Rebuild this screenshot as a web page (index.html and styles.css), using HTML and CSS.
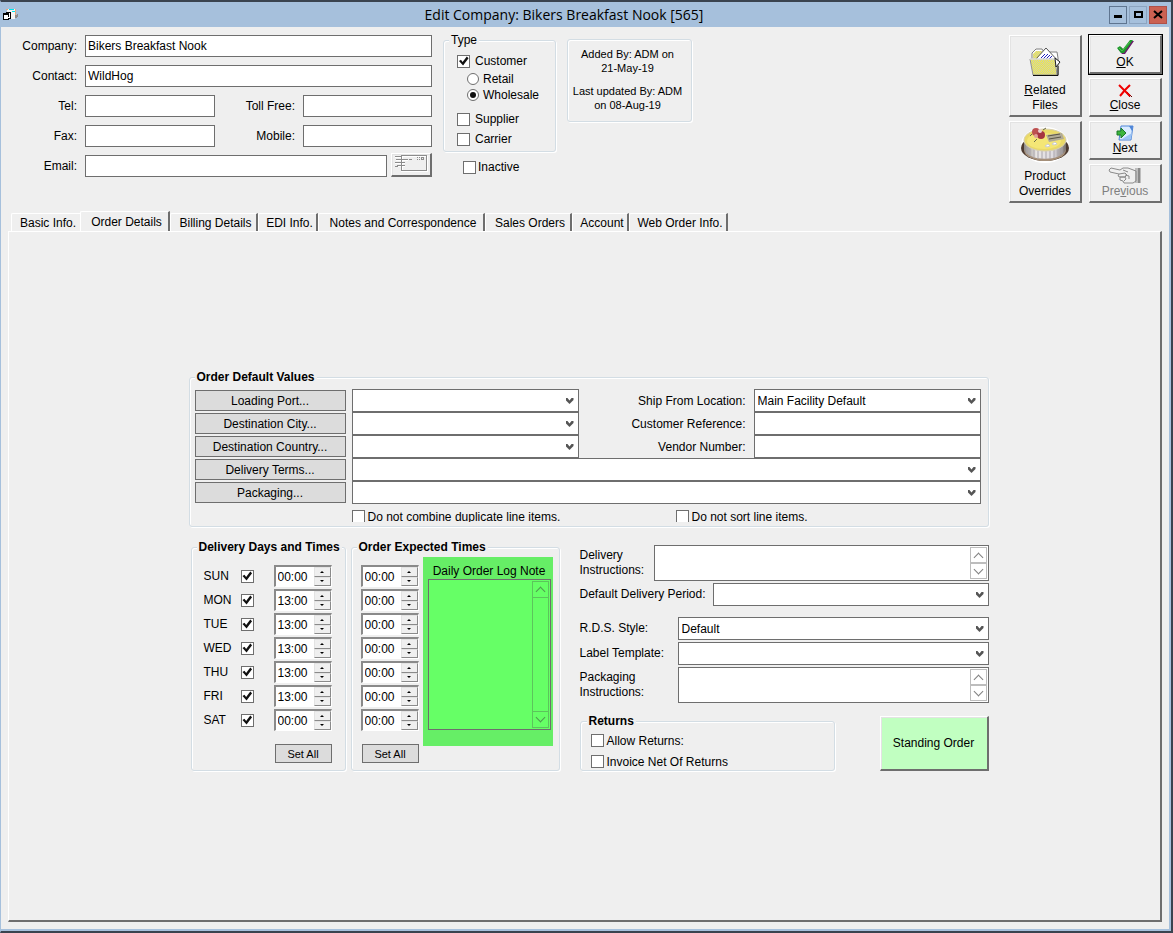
FILE: index.html
```html
<!DOCTYPE html>
<html lang="en">

<head>
    <meta charset="UTF-8">
    <title>Edit Company: Bikers Breakfast Nook [565]</title>
    <link rel="stylesheet" href="styles.css">
</head>

<body>
    <header class="titlebar">
        <svg class="app-icon" width="16" height="14" viewBox="0 0 16 14" shape-rendering="crispEdges">
            <path d="M4 1h8v10H4z" fill="#f4f4f4" />
            <path d="M3 1h2v1H3zM12 1h1v6h-1z" fill="#e8a87c" />
            <path d="M6 1h5v1H6zM9 3h3v1H9zM5 4h3v1H5z" fill="#00e5ee" />
            <path d="M12 7h2v3h-2zM14 6h1v3h-1z" fill="#8a8a8a" />
            <path d="M3 4h5v7H3zM0 5h6v7H0z" fill="#000" />
            <path d="M4 5h3v5H4zM1 7h4v4H1z" fill="#fff" />
            <path d="M5 6h1v3H5zM0 5h6v2H0z" fill="#000" />
        </svg>
        <h1>Edit Company: Bikers Breakfast Nook [565]</h1>
        <div class="window-buttons">
            <button type="button" class="win-btn" aria-label="Minimize"><svg width="10" height="9" viewBox="0 0 10 9"><path d="M1 5h8v3H1z" /></svg></button>
            <button type="button" class="win-btn soft" aria-label="Maximize"><svg width="10" height="9" viewBox="0 0 10 9"><path fill-rule="evenodd" d="M1 1h9v7H1zM3 3h5v3H3z" /></svg></button>
            <button type="button" class="win-btn close" aria-label="Close window"><svg width="10" height="9" viewBox="0 0 10 9"><path d="M1 1l8 7M9 1L1 8" stroke="#000" stroke-width="2" /></svg></button>
        </div>
    </header>

    <main>
        <div class="top">
            <div class="contact">
                <label for="company">Company:</label>
                <input class="wide" id="company" type="text" value="Bikers Breakfast Nook">
                <label for="contact">Contact:</label>
                <input class="wide" id="contact" type="text" value="WildHog">
                <label for="tel">Tel:</label>
                <input id="tel" type="text">
                <label for="tollfree">Toll Free:</label>
                <input id="tollfree" type="text">
                <label for="fax">Fax:</label>
                <input id="fax" type="text">
                <label for="mobile">Mobile:</label>
                <input id="mobile" type="text">
                <label for="email">Email:</label>
                <div class="wide email">
                    <input id="email" type="text">
                    <button type="button" class="raised mail" aria-label="Send email">
                        <svg width="34" height="18" viewBox="0 0 34 18">
                            <path d="M8 2h24v1H8zM8 3h1v13H8zM7 17h27v1H7zM33 2h1v16h-1zM1 3h7v1H1zM2 6h12v1H2zM1 9h10v1H1zM3 12h8v1H3z" fill="#fff" />
                            <path d="M7 1h26v1H7zM7 1h1v16H7zM7 16h26v1H7zM32 1h1v16h-1zM1 2h6v1H1zM2 5h12v1H2zM15 5h3v1h-3zM1 8h10v1H1zM3 11h8v1H3zM1 12h3v1H1z" fill="#8c8c8c" />
                            <path fill-rule="evenodd" d="M23 3h1v1h-1zM25 3h1v1h-1zM23 5h1v1h-1zM25 5h1v1h-1zM27 3h3v3h-3zM28 4h1v1h-1z" fill="#8c8c8c" />
                        </svg>
                    </button>
                </div>
            </div>

            <div class="kind">
                <fieldset class="group type">
                    <legend>Type</legend>
                    <label class="check"><input type="checkbox" checked>Customer</label>
                    <label class="check radio"><input type="radio" name="customer">Retail</label>
                    <label class="check radio"><input type="radio" name="customer" checked>Wholesale</label>
                    <label class="check supplier"><input type="checkbox">Supplier</label>
                    <label class="check"><input type="checkbox">Carrier</label>
                </fieldset>
                <label class="check inactive"><input type="checkbox">Inactive</label>
            </div>

            <div class="audit">
                <p>Added By: ADM on<br>21-May-19</p>
                <p>Last updated By: ADM<br>on 08-Aug-19</p>
            </div>

            <div class="actions">
                <button type="button" class="raised tall">
                    <svg width="34" height="32" viewBox="0 0 34 32">
                        <defs>
                            <pattern id="dither" width="2" height="2" patternUnits="userSpaceOnUse">
                                <path d="M0 0h2v2H0z" fill="#f6f03c" />
                                <path d="M0 0h1v1H0zM1 1h1v1H1z" fill="#c9c9b8" />
                            </pattern>
                        </defs>
                        <path d="M4 13V7l4-4h6l2 3h13l1 6v17h-3z" fill="#fff" stroke="#808080" />
                        <path d="M5 13V8l3-3h6v8z" fill="url(#dither)" />
                        <path d="M8 13L18 2l13 14-4 5z" fill="#fff" stroke="#555" />
                        <path d="M13 12l4-4M15 13l5-5M18 13l4-4M21 13l3-3" stroke="#2020c0" />
                        <path d="M2 13h25l2 16H5z" fill="url(#dither)" stroke="#909090" />
                        <path d="M2 13h25l1 3" fill="none" stroke="#fff" />
                        <path d="M5 29.500h25V20" fill="none" stroke="#111" stroke-width="1" />
                        <path d="M27 12l5 4-4 5z" fill="#fff" stroke="#222" />
                    </svg>
                    <span><u>R</u>elated<br>Files</span>
                </button>
                <button type="button" class="raised default">
                    <svg width="18" height="16" viewBox="0 0 18 16">
                        <path d="M2 10l3-2 3 3 7-9h3L9 15H6z" fill="#6a1a6a" />
                        <path d="M1 9l3-2 3 3 7-9h3L8 14H5z" fill="#1f9a2c" />
                        <path d="M3 9l3 3 8-9" fill="none" stroke="#4cc24c" />
                    </svg>
                    <span><u>O</u>K</span>
                </button>
                <button type="button" class="raised">
                    <svg width="16" height="14" viewBox="0 0 16 14">
                        <path d="M3 2l6 6 4 5M10 8l5 5" fill="none" stroke="#600000" />
                        <path d="M2 1l7 7 4 4" fill="none" stroke="#f00000" stroke-width="2" />
                        <path d="M13 1L8 6l-5 6" fill="none" stroke="#f00000" stroke-width="2" />
                    </svg>
                    <span><u>C</u>lose</span>
                </button>
                <button type="button" class="raised tall">
                    <svg width="50" height="38" viewBox="0 0 50 38">
                        <defs>
                            <linearGradient id="side">
                                <stop offset="0" stop-color="#8e8a86" />
                                <stop offset=".3" stop-color="#e9e6e4" />
                                <stop offset=".7" stop-color="#dedbe0" />
                                <stop offset="1" stop-color="#77706c" />
                            </linearGradient>
                        </defs>
                        <ellipse cx="25" cy="19" rx="24" ry="18" fill="#fff" />
                        <ellipse cx="25" cy="22" rx="24" ry="13" fill="#4d3a30" />
                        <ellipse cx="25" cy="24" rx="21" ry="11" fill="#a58f79" />
                        <path d="M4 14v9c3 13 39 13 42 0v-9z" fill="url(#side)" />
                        <path d="M7 20v8M10 22v8M14 23v9M18 24v9M22 24v9M26 24v9M30 24v9M34 23v9M38 22v8M42 20v8" stroke="#a9a4aa" fill="none" />
                        <ellipse cx="25" cy="14" rx="21" ry="11" fill="#ead968" stroke="#d8d0b0" />
                        <ellipse cx="24" cy="15" rx="17" ry="8" fill="#f4e676" />
                        <path d="M26 9l16-2 2 6-15 3z" fill="#b1aa96" />
                        <path d="M28 10l12-2M29 13l12-2" stroke="#5a5446" />
                        <circle cx="16" cy="6" r="4" fill="#bd5050" />
                        <circle cx="21" cy="9" r="4" fill="#a63440" />
                        <circle cx="20" cy="5" r="2" fill="#ead0d0" />
                        <circle cx="16" cy="10" r="2" fill="#e0a098" />
                        <path d="M12 8l-2 2M17 13l-3 3M23 4l3-2" stroke="#6a6a4a" />
                        <path d="M25 20l3-2 2 2-3 1zM32 18l3-2 2 2-3 1z" fill="#fff" stroke="#ccc" />
                    </svg>
                    <span>Product<br>Overrides</span>
                </button>
                <button type="button" class="raised">
                    <svg width="18" height="16" viewBox="0 0 18 16">
                        <path d="M5 1h12l-2 14H3z" fill="#d9ebff" stroke="#4f86d8" />
                        <path d="M13 1h4l-1 5z" fill="#4f86d8" />
                        <path d="M6 14h9l1-6z" fill="#9cc3f4" />
                        <path d="M1 6h4V3l5 5-5 5v-3H1z" fill="#3db53d" stroke="#1d7a2a" />
                    </svg>
                    <span><u>N</u>ext</span>
                </button>
                <button type="button" class="raised" disabled>
                    <svg width="34" height="17" viewBox="0 0 34 17" fill="#efefef" stroke="#8a8a8a">
                        <path d="M3 1L1 3l1 2 9 2-1 2 2 1v3l3 1 1 2h9l3-2V4l-8-3h-5l-3 2z" />
                        <path d="M11 7l6-1 2 2-2 2h-5M12 10h5l1 2-2 2M17 8l4 1v3M15 3l5 2" fill="none" />
                        <path d="M28 1v15" stroke-width="1" />
                        <path d="M31 1v15" stroke-width="3" />
                    </svg>
                    <span>Pre<u>v</u>ious</span>
                </button>
            </div>
        </div>

        <nav class="tabs" role="tablist">
            <button type="button" role="tab">Basic Info.</button>
            <button type="button" role="tab" class="selected" aria-selected="true">Order Details</button>
            <button type="button" role="tab">Billing Details</button>
            <button type="button" role="tab">EDI Info.</button>
            <button type="button" role="tab">Notes and Correspondence</button>
            <button type="button" role="tab">Sales Orders</button>
            <button type="button" role="tab">Account</button>
            <button type="button" role="tab">Web Order Info.</button>
        </nav>

        <section class="panel">
            <div class="content">
                <fieldset class="group bold defaults">
                    <legend>Order Default Values</legend>
                    <div class="defaults-grid">
                        <button type="button" class="flat">Loading Port...</button>
                        <span class="select"><select aria-label="Loading Port"><option></option></select></span>
                        <label for="ship">Ship From Location:</label>
                        <span class="select"><select id="ship"><option>Main Facility Default</option></select></span>

                        <button type="button" class="flat">Destination City...</button>
                        <span class="select"><select aria-label="Destination City"><option></option></select></span>
                        <label for="custref">Customer Reference:</label>
                        <input id="custref" type="text">

                        <button type="button" class="flat">Destination Country...</button>
                        <span class="select"><select aria-label="Destination Country"><option></option></select></span>
                        <label for="vendor">Vendor Number:</label>
                        <input id="vendor" type="text">

                        <button type="button" class="flat">Delivery Terms...</button>
                        <span class="select wide"><select aria-label="Delivery Terms"><option></option></select></span>

                        <button type="button" class="flat">Packaging...</button>
                        <span class="select wide"><select aria-label="Packaging"><option></option></select></span>
                    </div>
                    <div class="line-options">
                        <label class="check"><input type="checkbox">Do not combine duplicate line items.</label>
                        <label class="check"><input type="checkbox">Do not sort line items.</label>
                    </div>
                </fieldset>

                <div class="lower">
                    <fieldset class="group bold days">
                        <legend>Delivery Days and Times</legend>
                        <div class="times" id="delivery"></div>
                        <button type="button" class="flat set-all">Set All</button>
                    </fieldset>

                    <fieldset class="group bold expected">
                        <legend>Order Expected Times</legend>
                        <div class="expected-row">
                            <div class="expected-times">
                                <div class="times" id="expected"></div>
                                <button type="button" class="flat set-all">Set All</button>
                            </div>
                            <div class="log">
                                <label for="lognote">Daily Order Log Note</label>
                                <div class="memo log-memo">
                                    <textarea id="lognote"></textarea>
                                    <div class="scroll"><i class="up"></i><i class="down"></i></div>
                                </div>
                            </div>
                        </div>
                    </fieldset>

                    <div class="settings">
                        <div class="field">
                            <label for="delinst">Delivery<br>Instructions:</label>
                            <div class="memo">
                                <textarea id="delinst"></textarea>
                                <div class="scroll"><i class="up"></i><i class="down"></i></div>
                            </div>
                        </div>
                        <div class="field">
                            <label for="period">Default Delivery Period:</label>
                            <span class="select"><select id="period"><option></option></select></span>
                        </div>
                        <div class="field named style">
                            <label for="rds">R.D.S. Style:</label>
                            <span class="select"><select id="rds"><option>Default</option></select></span>
                        </div>
                        <div class="field named">
                            <label for="template">Label Template:</label>
                            <span class="select"><select id="template"><option></option></select></span>
                        </div>
                        <div class="field named">
                            <label for="packinst">Packaging<br>Instructions:</label>
                            <div class="memo">
                                <textarea id="packinst"></textarea>
                                <div class="scroll"><i class="up"></i><i class="down"></i></div>
                            </div>
                        </div>
                        <div class="bottom">
                            <fieldset class="group bold returns">
                                <legend>Returns</legend>
                                <label class="check"><input type="checkbox">Allow Returns:</label>
                                <label class="check"><input type="checkbox">Invoice Net Of Returns</label>
                            </fieldset>
                            <button type="button" class="raised standing">Standing Order</button>
                        </div>
                    </div>
                </div>
            </div>
        </section>
    </main>

    <script src="script.js"></script>
</body>

</html>
```
FILE: styles.css
```css
* {
    box-sizing: border-box;
}

body {
    margin: 0;
    min-height: 100vh;
    display: flex;
    flex-direction: column;
    border: solid #3a434f;
    border-width: 2px 2px 2px 1px;
    border-left-color: #a6c0dc;
    box-shadow: inset -2px -2px #a6c0dc;
    background: #efefef;
    color: #000;
    font: 12px/14px "Liberation Sans", Arial, sans-serif;
}

button,
input,
select,
textarea {
    font: inherit;
    color: inherit;
    margin: 0;
    border-radius: 0;
}

svg {
    display: block;
    flex: none;
}

/* title bar */

.titlebar {
    display: flex;
    align-items: center;
    height: 25px;
    padding: 0 4px 0 2px;
    background: #a6c0dc;
}

h1 {
    flex: 1;
    margin: 0;
    font: 14px/24px "Open Sans", "Noto Sans", sans-serif;
    text-align: center;
}

.window-buttons {
    display: flex;
    gap: 2px;
}

.win-btn {
    display: flex;
    align-items: center;
    justify-content: center;
    width: 18px;
    height: 18px;
    padding: 0;
    border: 1px solid #5f7590;
    background: #a6c0dc;
}

.win-btn.soft {
    border-color: #8ca4c0;
}

.win-btn.close {
    border-color: #b05048;
    background: #cb6152;
}

/* shared controls */

main {
    flex: 1;
    display: flex;
    flex-direction: column;
    padding: 6px 9px 9px 7px;
}

input[type=text],
select,
textarea {
    width: 100%;
    min-width: 0;
    border: 1px solid #6e6e6e;
    padding: 0 2px;
    background: #fff;
    appearance: none;
}

input[type=text] {
    height: 22px;
}

.select {
    position: relative;
    display: block;
}

.select select {
    display: block;
    height: 23px;
    padding: 0 3px;
}

.select::after {
    content: "";
    position: absolute;
    right: 5px;
    top: 9px;
    width: 8px;
    height: 6px;
    background: #555;
    clip-path: polygon(0 0, 25% 0, 50% 42%, 75% 0, 100% 0, 100% 33%, 50% 100%, 0 33%);
    pointer-events: none;
}

.check {
    display: flex;
    align-items: center;
    gap: 3px;
}

.check input,
.times input[type=checkbox] {
    appearance: none;
    flex: none;
    width: 13px;
    height: 13px;
    border: 1px solid #6e6e6e;
    background: #fff;
}

.check input[type=radio] {
    width: 12px;
    height: 12px;
    border-radius: 50%;
}

input[type=checkbox]:checked::before {
    content: "";
    display: block;
    width: 11px;
    height: 11px;
    background: #111;
    clip-path: polygon(9% 50%, 27% 38%, 42% 60%, 80% 10%, 96% 24%, 46% 92%);
}

input[type=radio]:checked::before {
    content: "";
    display: block;
    width: 6px;
    height: 6px;
    margin: 2px;
    border-radius: 50%;
    background: #111;
}

.group {
    min-width: 0;
    margin: 0;
    padding: 0;
    border: 1px solid #d3dde4;
    border-radius: 3px;
    box-shadow: 1px 1px #fff, inset 1px 1px #fff;
}

.group legend {
    margin-left: 5px;
    padding: 0 2px;
    background: #efefef;
    white-space: nowrap;
}

.bold legend {
    font-weight: bold;
}

.raised {
    padding: 0;
    border: solid;
    border-width: 1px 2px 2px 1px;
    border-color: #fff #6e6e6e #6e6e6e #fff;
    border-style: solid;
    box-shadow: inset 1px 1px #e3e3e3;
    background: #efefef;
}

.flat {
    height: 21px;
    padding: 0;
    border: 1px solid #6e6e6e;
    background: #dcdcdc;
}

/* top part */

.top {
    display: flex;
    align-items: flex-start;
    height: 178px;
}

.contact {
    display: grid;
    grid-template-columns: 69px 130px 72px 129px;
    grid-auto-rows: 22px;
    gap: 8px;
    margin-top: 2px;
}

.contact > label {
    align-self: center;
    text-align: right;
}

.contact .wide {
    grid-column: 2 / 5;
}

.email {
    display: flex;
    align-items: flex-end;
    gap: 4px;
}

.mail {
    flex: none;
    display: flex;
    justify-content: center;
    width: 41px;
    height: 24px;
}

.kind {
    width: 113px;
    margin-left: 11px;
}

.type {
    height: 119px;
}

.type .check,
.inactive {
    margin-left: 13px;
    gap: 5px;
}

.type .check {
    height: 20px;
}

.type legend + .check {
    margin-top: 4px;
}

.type .radio {
    height: 16px;
    margin-left: 23px;
    gap: 4px;
}

.type .supplier {
    margin-top: 6px;
}

.kind .inactive {
    gap: 2px;
    margin: 8px 0 0 20px;
}

.audit {
    width: 125px;
    height: 83px;
    margin: 6px 0 0 11px;
    padding: 7px 4px 0 0;
    border: 1px solid #d3dde4;
    border-radius: 3px;
    box-shadow: 1px 1px #fff, inset 1px 1px #fff;
    font-size: 11px;
    text-align: center;
}

.audit p {
    margin: 0 0 9px;
}

.actions {
    display: grid;
    grid-template-columns: 73px 73px;
    grid-template-rows: repeat(4, 39px);
    grid-auto-flow: column;
    gap: 4px 7px;
    margin: 2px 0 0 auto;
}

.actions .raised {
    display: flex;
    flex-direction: column;
    align-items: center;
    justify-content: flex-end;
    grid-column: 2;
    padding-bottom: 2px;
    line-height: 15px;
}

.actions .tall {
    grid-row: span 2;
    grid-column: 1;
    gap: 5px;
}

.actions .default {
    outline: 1px solid #000;
}

.actions .raised:disabled {
    color: #808080;
}

/* tabs */

.tabs {
    display: grid;
    grid-template-columns: 69px 90px 88px 60px 167px 87px 57px 99px;
    align-items: end;
    height: 20px;
    padding-left: 3px;
}

.tabs button {
    height: 18px;
    padding: 0 0 0 4px;
    border: solid #fff;
    border-width: 1px 2px 0 1px;
    border-right-color: #6e6e6e;
    border-radius: 2px 0 0 0;
    background: #efefef;
    white-space: nowrap;
}

.tabs button:first-child {
    border-right: 0;
}

.tabs .selected {
    height: 20px;
}

.panel {
    flex: 1;
    border: solid;
    border-width: 1px 2px 2px 1px;
    border-color: #fff #6e6e6e #6e6e6e #fff;
    padding: 138px 0 0 8px;
}

.content {
    width: 800px;
    margin: 0 auto;
}

/* order default values */

.defaults {
    padding: 0 7px 4px 5px;
}

.defaults legend {
    margin-left: 0;
}

.defaults-grid {
    display: grid;
    grid-template-columns: 151px 227px 1fr 227px;
    grid-auto-rows: 23px;
    column-gap: 6px;
    align-items: center;
    margin-top: 5px;
}

.defaults-grid label {
    padding-right: 2px;
    text-align: right;
}

.defaults-grid input[type=text] {
    height: 23px;
}

.defaults-grid .wide {
    grid-column: 2 / 5;
}

.line-options {
    display: grid;
    grid-template-columns: 324px 1fr;
    height: 12px;
    margin: 6px 0 0 157px;
    overflow: hidden;
}

.line-options .check {
    height: 13px;
}

/* days and times */

.lower {
    display: grid;
    grid-template-columns: 155px 209px 1fr;
    column-gap: 5px;
    margin-top: 13px;
    padding-left: 2px;
}

.days {
    padding: 0 13px 6px 12px;
}

.days legend {
    margin-left: -7px;
}

.times {
    display: grid;
    gap: 2px;
    margin-top: 11px;
}

.day {
    display: grid;
    grid-template-columns: 37px 1fr 58px;
    align-items: center;
}

.spin {
    display: grid;
    grid-template-columns: 1fr 17px;
    width: 58px;
    height: 22px;
    border: solid;
    border-width: 2px 1px 1px 2px;
    border-color: #8a8a8a #fff #fff #8a8a8a;
    background: #fff;
}

.spin input[type=text] {
    height: 19px;
    border: 0;
}

.spin-buttons {
    display: grid;
    grid-template-rows: 1fr 1fr;
}

.spin-buttons button {
    display: flex;
    align-items: center;
    justify-content: center;
    min-height: 0;
    padding: 0;
    border: 1px solid;
    border-color: #e3e3e3 #8a8a8a #8a8a8a #e3e3e3;
    background: #efefef;
}

.spin-buttons button::before {
    content: "";
    border: solid transparent;
    border-width: 0 2px 2px;
    border-bottom-color: #000;
}

.spin-buttons .less::before {
    border-width: 2px 2px 0;
    border-top-color: #000;
}

.set-all {
    display: block;
    width: 57px;
    height: 19px;
    margin: 13px 0 0 auto;
    font-size: 11px;
}

.expected-row {
    display: flex;
    align-items: flex-start;
    gap: 4px;
    padding-left: 9px;
}

.log {
    width: 130px;
    height: 189px;
    margin-top: 3px;
    padding: 7px 2px 0 5px;
    background: #66ee66;
}

.log label {
    display: block;
    margin-bottom: 1px;
    text-align: center;
}

.memo {
    flex: 1;
    display: flex;
    height: 36px;
    padding: 1px;
    border: 1px solid #6e6e6e;
    background: #fff;
}

.memo textarea {
    flex: 1;
    border: 0;
    background: none;
    resize: none;
}

.scroll {
    flex: none;
    display: flex;
    flex-direction: column;
    justify-content: space-between;
    width: 17px;
}

.scroll i {
    display: flex;
    align-items: center;
    justify-content: center;
    height: 16px;
    border: 1px solid #bdbdbd;
}

.scroll i::before {
    content: "";
    width: 6px;
    height: 6px;
    margin-top: 4px;
    border: solid #808080;
    border-width: 1px 0 0 1px;
    transform: rotate(45deg);
}

.scroll .down::before {
    margin: 0 0 4px;
    transform: rotate(225deg);
}

.log-memo {
    height: 151px;
    background: #66ff66;
}

.log-memo .scroll {
    border: 1px solid #5cc45c;
}

.log-memo .scroll i {
    border: solid #5cc45c;
    border-width: 0 0 1px;
}

.log-memo .scroll .down {
    border-width: 1px 0 0;
}

.log-memo .scroll i::before {
    border-color: #4f9a4f;
}

/* right hand settings */

.settings {
    display: flex;
    flex-direction: column;
    gap: 2px;
    margin: 5px 0 0 15px;
}

.field {
    display: flex;
    align-items: center;
    gap: 7px;
}

.field label {
    min-width: 67px;
    line-height: 15px;
}

.field .select {
    flex: 1;
}

.named label {
    width: 91px;
}

.style {
    margin-top: 9px;
}

.bottom {
    display: flex;
    justify-content: space-between;
    align-items: flex-end;
    margin-top: 9px;
}

.returns {
    width: 255px;
    padding: 0 10px 2px;
}

.returns legend {
    margin-left: -4px;
}

.returns .check {
    height: 13px;
    margin-top: 6px;
}

.returns .check + .check {
    margin-top: 8px;
}

.standing {
    width: 109px;
    height: 55px;
    background: #c1ffc1;
}
```
FILE: script.js
```js
const days = ["SUN", "MON", "TUE", "WED", "THU", "FRI", "SAT"];
const deliveryTimes = ["00:00", "13:00", "13:00", "13:00", "13:00", "13:00", "00:00"];

function spinBox(value, label) {
    return `<div class="spin">
        <input type="text" value="${value}" aria-label="${label}">
        <div class="spin-buttons">
            <button type="button" class="more" aria-label="Later"></button>
            <button type="button" class="less" aria-label="Earlier"></button>
        </div>
    </div>`;
}

days.forEach((day, i) => {
    const id = "day-" + day.toLowerCase();

    document.querySelector("#delivery").innerHTML += `<div class="day">
        <label for="${id}">${day}</label>
        <input type="checkbox" id="${id}" checked>
        ${spinBox(deliveryTimes[i], day + " delivery time")}
    </div>`;

    document.querySelector("#expected").innerHTML += spinBox("00:00", day + " expected time");
});
```
